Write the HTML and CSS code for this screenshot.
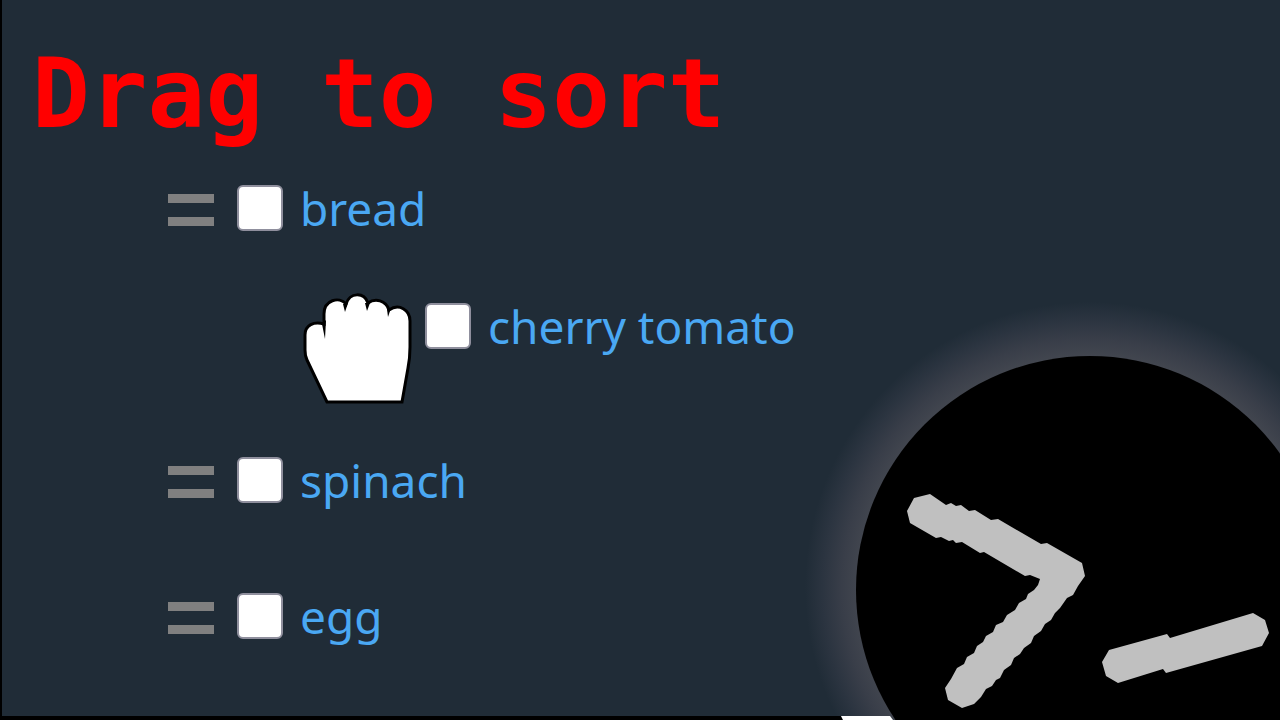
FILE: index.html
```
<!DOCTYPE html>
<html lang="en">
<head>
    <meta charset="UTF-8">
    <meta name="viewport" content="width=device-width, initial-scale=1.0">
    <title>Drag to sort</title>
    <link rel="stylesheet" href="styles.css">
</head>
<body>
    <main class="page">
        <h1 class="title">Drag to sort</h1>

        <ul class="list">
            <li class="item">
                <span class="handle"></span>
                <input type="checkbox" class="check" id="bread">
                <label for="bread">bread</label>
            </li>
            <li class="item dragging">
                <span class="handle">
                    <svg class="hand" viewBox="0 0 114 118">
                        <path d="M25 112 L5 70 Q3 66 3 60 V45 C3 35 12 31 22 34 V24 C22 10 37 6 44 14 C48 2 62 2 66 13 C73 8 84 10 87 20 C97 13 108 20 108 31 V57 Q108 68 106 78 L100 112 Z" fill="#fff" stroke="#000" stroke-width="3"/>
                        <path d="M20 34 L23 49 L24 30 Z M41 14 L43 22 L46 13 Z M63 13 L65 21 L68 13 Z M85 19 L86 27 L89 18 Z" fill="#000"/>
                    </svg>
                </span>
                <input type="checkbox" class="check" id="tomato">
                <label for="tomato">cherry tomato</label>
            </li>
            <li class="item">
                <span class="handle"></span>
                <input type="checkbox" class="check" id="spinach">
                <label for="spinach">spinach</label>
            </li>
            <li class="item">
                <span class="handle"></span>
                <input type="checkbox" class="check" id="egg">
                <label for="egg">egg</label>
            </li>
        </ul>
    </main>

    <div class="track"></div>

    <svg class="logo" viewBox="800 290 480 430">
        <defs>
            <radialGradient id="glow" gradientUnits="userSpaceOnUse" cx="1090" cy="587" r="285">
                <stop offset="0.81" stop-color="#42464f"/>
                <stop offset="0.87" stop-color="#393e49"/>
                <stop offset="0.94" stop-color="#2b3440"/>
                <stop offset="1" stop-color="#202c37"/>
            </radialGradient>
        </defs>
        <circle cx="1090" cy="587" r="285" fill="url(#glow)"/>
        <path d="M800 716 H841 L843 720 H800 Z" fill="#000"/>
        <path d="M841 716 H890 L893 720 H843 Z" fill="#fff"/>
        <circle cx="1090" cy="590" r="234" fill="#000"/>
        <path d="M930 494 L914 498 L907 511 L910 523 L936 538 L941 537 L949 541 L953 540 L956 543 L962 542 L980 553 L984 552 L1025 576 L1030 575 L1040 579 L1038 585 L1034 590 L1028 594 L1026 599 L1019 603 L1015 610 L1007 615 L1003 622 L996 625 L993 632 L986 636 L983 642 L977 646 L974 653 L967 657 L964 664 L957 668 L951 679 L945 688 L948 700 L962 708 L974 704 L981 697 L986 689 L992 686 L996 680 L1000 678 L1004 670 L1011 665 L1014 658 L1020 654 L1024 648 L1031 643 L1034 636 L1041 631 L1045 624 L1051 620 L1055 613 L1060 608 L1067 598 L1073 595 L1078 586 L1085 576 L1082 563 L1047 543 L1041 544 L998 519 L991 520 L975 510 L969 511 L961 505 L956 506 L951 503 L946 505 Z" fill="#c0c0c0"/>
        <path d="M1109 650 L1167 634 L1170 638 L1253 613 L1265 620 L1269 633 L1262 646 L1166 673 L1163 669 L1118 683 L1106 676 L1102 662 Z" fill="#c0c0c0"/>
    </svg>
</body>
</html>
```
FILE: styles.css
```
* {
    box-sizing: border-box;
}

body {
    margin: 0;
    min-height: 100vh;
    display: flex;
    flex-direction: column;
    position: relative;
    overflow: hidden;
    background-color: #202c37;
    color: #4aa8f3;
    font-family: "Noto Sans", sans-serif;
    font-size: 46px;
    line-height: 64px;
}

.page {
    flex: 1;
    border-left: 2px solid #000;
    padding: 38px 30px 0;
}

.title {
    margin: 0;
    color: #ff0000;
    font-family: "DejaVu Sans Mono", monospace;
    font-size: 96px;
    line-height: 112px;
}

.list {
    list-style: none;
    margin: 26px 0 0;
    padding: 0 0 0 136px;
    display: flex;
    flex-direction: column;
    gap: 72px;
}

.item {
    display: flex;
    align-items: center;
    height: 64px;
}

.handle {
    position: relative;
    width: 46px;
    height: 32px;
    margin: 4px 23px 0 0;
    border-top: 9px solid #808080;
    border-bottom: 9px solid #808080;
}

.check {
    appearance: none;
    width: 46px;
    height: 46px;
    margin: 0 17px 0 0;
    border: 2px solid #8f8f9d;
    border-radius: 6px;
    background-color: #fff;
}

.check:checked {
    background-color: #4aa8f3;
}

/* the row that is being held */
.dragging {
    margin: -18px 0 18px 188px;
}

.dragging .handle {
    border-color: transparent;
}

.hand {
    position: absolute;
    left: -54px;
    top: -31px;
    width: 114px;
    height: 118px;
}

.track {
    height: 4px;
    background-color: #000;
}

.logo {
    position: absolute;
    right: 0;
    bottom: 0;
    width: 480px;
    height: 430px;
}
```
